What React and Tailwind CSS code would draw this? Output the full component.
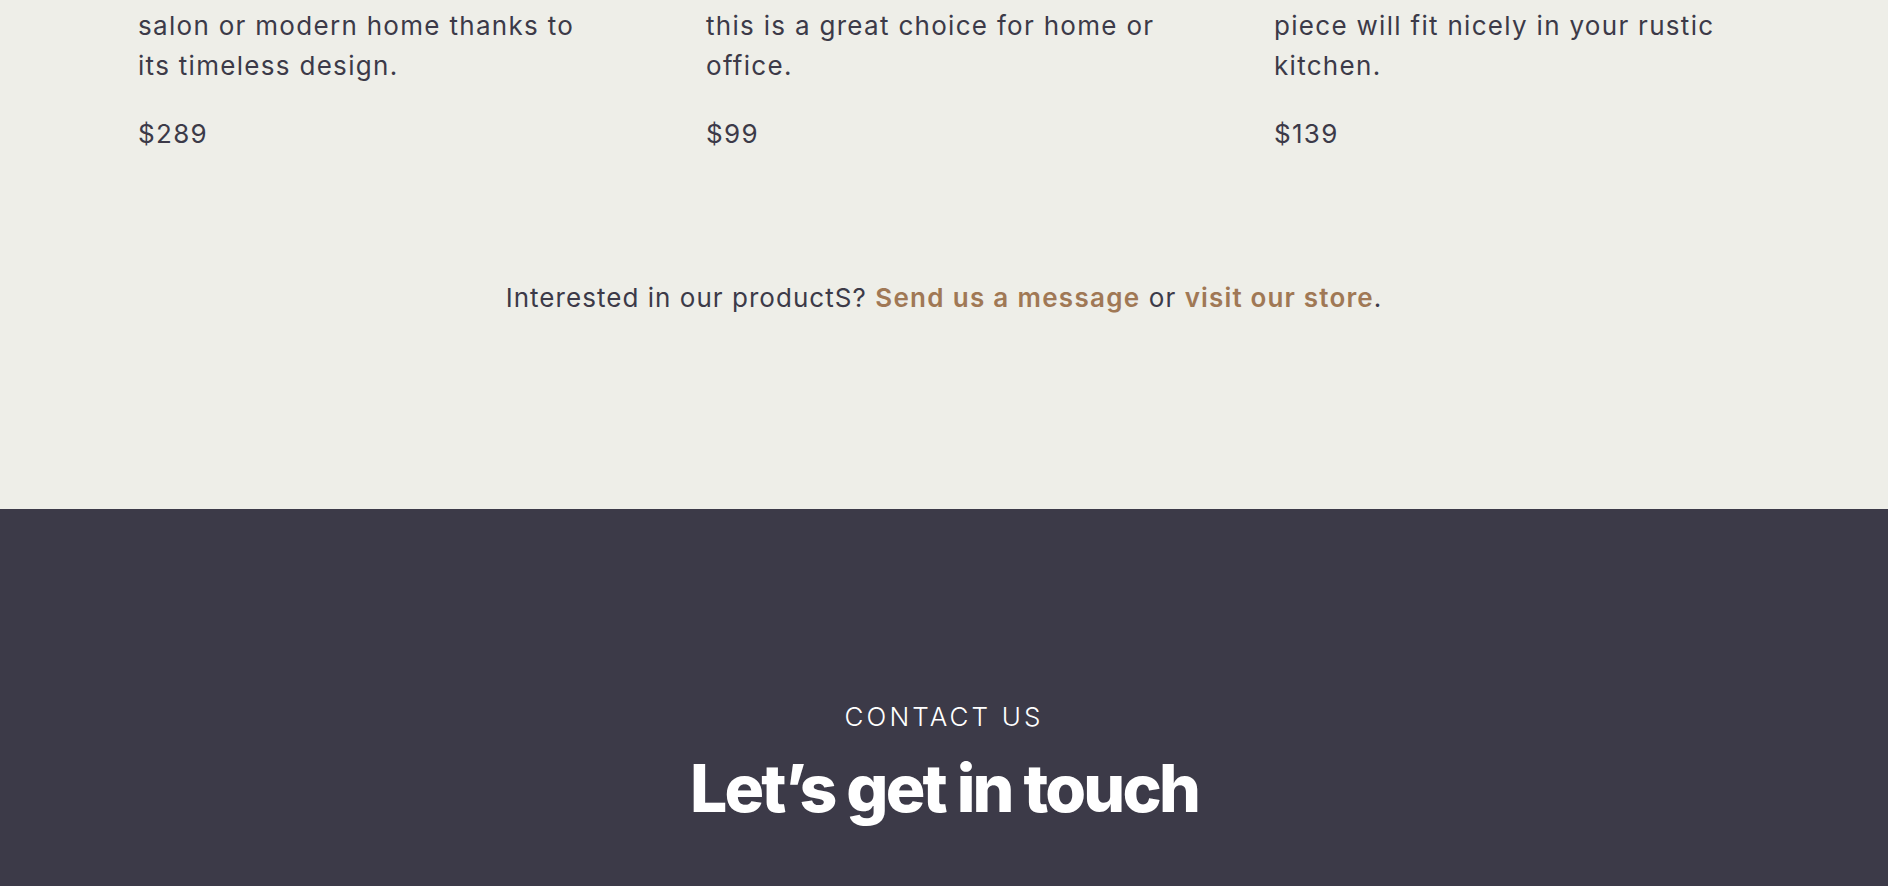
const products = [
  { lines: ['salon or modern home thanks to', 'its timeless design.'], price: '$289' },
  { lines: ['this is a great choice for home or', 'office.'], price: '$99' },
  { lines: ['piece will fit nicely in your rustic', 'kitchen.'], price: '$139' },
]

export default function App() {
  return (
    <div className="min-h-screen bg-[#3c3a48] font-['Inter',sans-serif]">
      <section className="bg-[#eeeee8] h-[509px] text-[#3c3a48]">
        <div className="grid grid-cols-3 gap-[92px] pl-[138px] pr-[138px] pt-[6px]">
          {products.map((p) => (
            <div key={p.price}>
              <p className="text-[26px] leading-[40px] tracking-[0.05em] whitespace-nowrap">
                {p.lines[0]}
                <br />
                {p.lines[1]}
              </p>
              <p className="mt-[28px] text-[26px] leading-[40px] tracking-[0.05em]">{p.price}</p>
            </div>
          ))}
        </div>
        <p className="mt-[124px] text-center text-[26px] leading-[40px] tracking-[0.04em]">
          Interested in our productS?{' '}
          <a href="#" className="font-semibold tracking-[0.05em] text-[#a07855]">Send us a message</a> or{' '}
          <a href="#" className="font-semibold tracking-[0.045em] text-[#a07855]">visit our store</a>.
        </p>
      </section>
      <section className="flex flex-col items-center pt-[190px] pb-[80px] text-white">
        <p className="text-[26px] font-light tracking-[0.12em] leading-[36px]">CONTACT US</p>
        <h2 className="mt-[15px] text-[66px] font-extrabold tracking-[-0.042em] leading-[76px]">Let’s get in touch</h2>
      </section>
    </div>
  )
}
